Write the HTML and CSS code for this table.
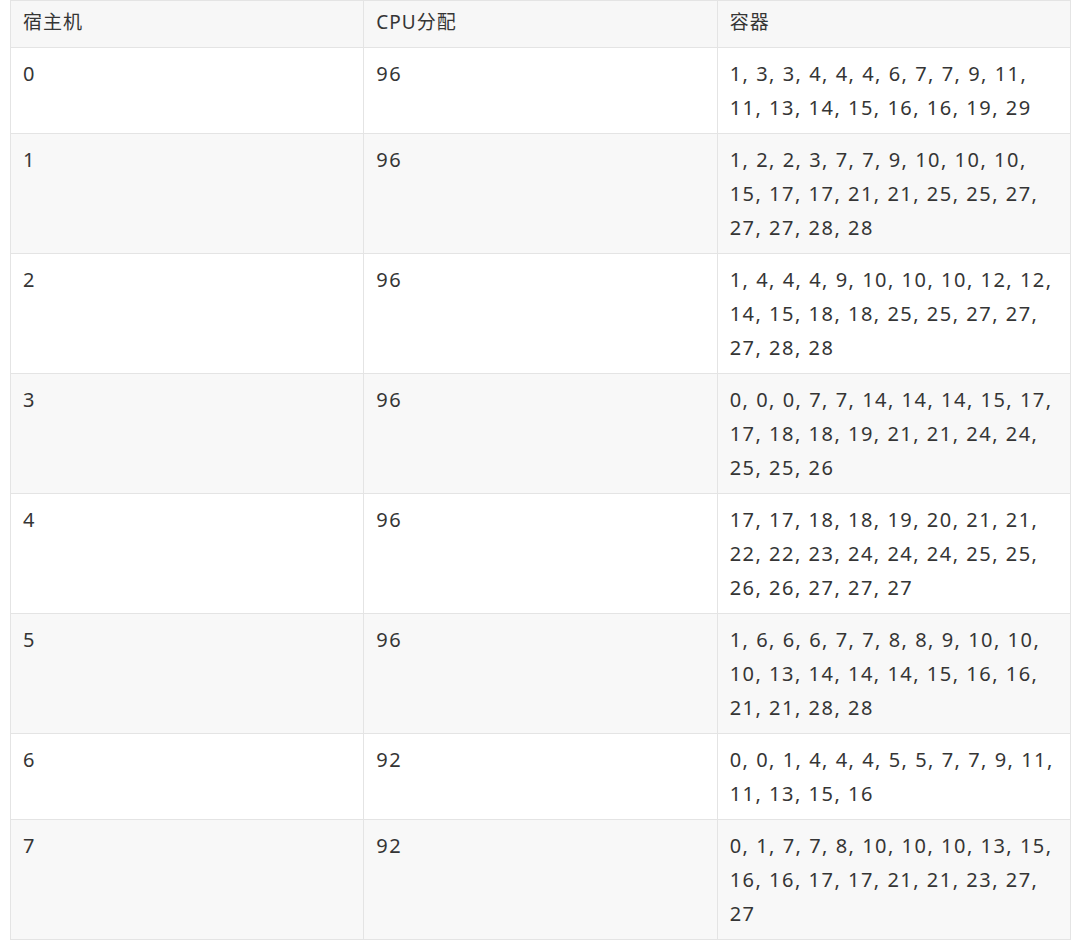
FILE: index.html
```html
<!DOCTYPE html>
<html lang="zh">
<head>
<meta charset="utf-8">
<title>宿主机 CPU分配</title>
<link rel="stylesheet" href="styles.css">
</head>
<body>
<div class="wrap">
<table class="alloc">
  <colgroup><col class="c1"><col class="c2"><col class="c3"></colgroup>
  <thead>
    <tr><th>宿主机</th><th>CPU分配</th><th>容器</th></tr>
  </thead>
  <tbody>
    <tr><td>0</td><td>96</td><td>1, 3, 3, 4, 4, 4, 6, 7, 7, 9, 11, 11, 13, 14, 15, 16, 16, 19, 29</td></tr>
    <tr><td>1</td><td>96</td><td>1, 2, 2, 3, 7, 7, 9, 10, 10, 10, 15, 17, 17, 21, 21, 25, 25, 27, 27, 27, 28, 28</td></tr>
    <tr><td>2</td><td>96</td><td>1, 4, 4, 4, 9, 10, 10, 10, 12, 12, 14, 15, 18, 18, 25, 25, 27, 27, 27, 28, 28</td></tr>
    <tr><td>3</td><td>96</td><td>0, 0, 0, 7, 7, 14, 14, 14, 15, 17, 17, 18, 18, 19, 21, 21, 24, 24, 25, 25, 26</td></tr>
    <tr><td>4</td><td>96</td><td>17, 17, 18, 18, 19, 20, 21, 21, 22, 22, 23, 24, 24, 24, 25, 25, 26, 26, 27, 27, 27</td></tr>
    <tr><td>5</td><td>96</td><td>1, 6, 6, 6, 7, 7, 8, 8, 9, 10, 10, 10, 13, 14, 14, 14, 15, 16, 16, 21, 21, 28, 28</td></tr>
    <tr><td>6</td><td>92</td><td>0, 0, 1, 4, 4, 4, 5, 5, 7, 7, 9, 11, 11, 13, 15, 16</td></tr>
    <tr><td>7</td><td>92</td><td>0, 1, 7, 7, 8, 10, 10, 10, 13, 15, 16, 16, 17, 17, 21, 21, 23, 27, 27</td></tr>
  </tbody>
</table>
</div>
</body>
</html>
```

FILE: styles.css
```css
html, body {
  margin: 0;
  padding: 0;
  background: #ffffff;
}

.wrap {
  padding: 0 9px 0 10px;
}

.alloc {
  width: 1061px;
  border-collapse: collapse;
  table-layout: fixed;
  font-family: "Noto Sans", "Noto Sans CJK SC", sans-serif;
  font-size: 20px;
  letter-spacing: 1.5px;
  color: #353535;
}

.alloc col { width: 353px; }

.alloc th,
.alloc td {
  border: 1px solid #e4e4e4;
  text-align: left;
  vertical-align: top;
  line-height: 34px;
  font-weight: 400;
  padding: 9px 13px 8px 12px;
  word-wrap: break-word;
}

.alloc th {
  background: #f7f7f7;
  padding-top: 4px;
  padding-bottom: 8px;
  font-size: 19px;
  letter-spacing: 1px;
}

.alloc tbody tr:nth-child(even) td {
  background: #f8f8f8;
}
```
